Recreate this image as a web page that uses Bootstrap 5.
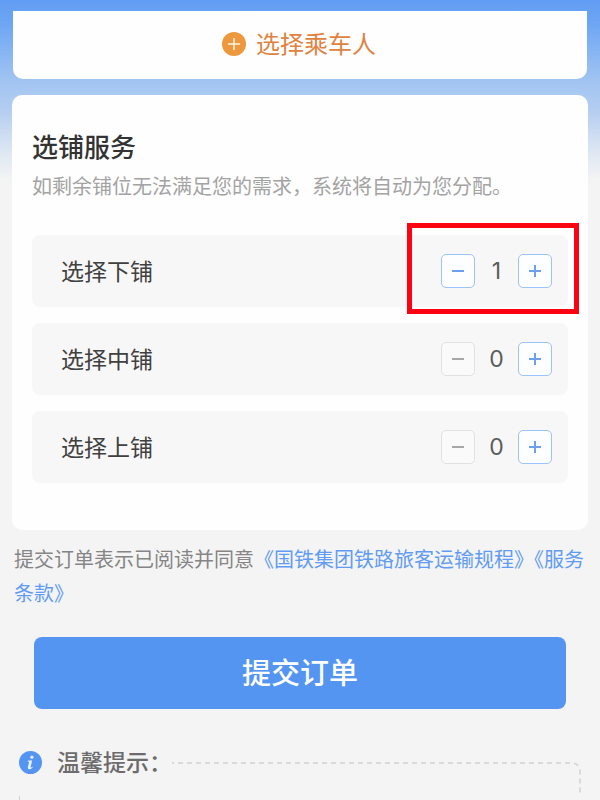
<!DOCTYPE html>
<html lang="zh-CN">
<head>
<meta charset="utf-8">
<meta name="viewport" content="width=device-width, initial-scale=1">
<title>提交订单</title>
<link href="https://cdn.jsdelivr.net/npm/bootstrap@5.3.0/dist/css/bootstrap.min.css" rel="stylesheet">
<style>
  body {
    font-family: "Noto Sans CJK SC", sans-serif;
    color: #333;
    background: #f4f4f4 linear-gradient(#619df4 0, #6ea6f4 24px, #a0c4f2 80px, #b4cdf1 110px, #dce6f2 150px, #f4f4f4 180px) no-repeat 0 0 / 100% 180px;
    min-height: 100vh;
    overflow-x: hidden;
  }
  .page { padding: 11px 12px 0; }
  .panel { background: #fefefe; border-radius: 10px; }
  .passenger { margin: 0 1px; height: 68px; border-radius: 0 0 10px 10px; }
  .passenger button { color: #e0823f; font-size: 24px; line-height: 32px; gap: 10px; padding: 0 2px 4px 0; }
  .passenger svg { margin-top: 2px; }
  .berths { padding: 31px 20px 47px; }
  .berths h1 { font-size: 26px; line-height: 40px; font-weight: 500; }
  .hint { font-size: 20px; line-height: 30px; color: #a3a3a3; margin-top: 5px; margin-bottom: 34px; white-space: nowrap; }
  .berth-row { background: #f7f7f7; border-radius: 8px; height: 72px; padding-left: 29px; font-size: 23px; color: #404040; }
  .berth-name { padding-bottom: 2px; }
  .step { width: 34px; height: 34px; border: 1px solid #9dc3f8; border-radius: 5px; background: #fdfeff; color: #6c9fef; }
  .step:disabled { border-color: #e2e2e2; background: #fafafa; color: #a8a8a8; }
  .count { width: 43px; font-family: Inter, sans-serif; font-size: 23px; color: #5c5c5c; }
  .highlight { right: -11px; top: -12px; bottom: -7px; width: 172px; border: 5px solid #fb0310; }
  .agreement { font-size: 20px; line-height: 34px; color: #858585; margin: 12px 0 27px 2px; }
  .agreement a { color: #629cf2; }
  .submit { height: 72px; background: #5595f2; border-radius: 8px; font-size: 29px; line-height: 40px; font-weight: 500; margin: 0 22px; padding: 0 0 4px; }
  .tips { margin: 34px 7px 0; }
  .tips h2 { font-size: 23px; line-height: 36px; font-weight: 500; color: #6c6c6c; margin-left: 15px; }
  .tips-frame { height: 37px; }
  .tips-frame rect { width: calc(100% + 19px); fill: none; stroke: #dadada; stroke-width: 2; stroke-dasharray: 5 4; }
  .tips-edge { width: 1px; height: 4px; background: #cfcfcf; }
</style>
</head>
<body>
<main class="container-fluid px-0">
  <div class="page">
    <section class="panel passenger d-flex align-items-center justify-content-center">
      <button type="button" class="btn border-0 d-flex align-items-center">
        <svg width="24" height="24" viewBox="0 0 24 24" aria-hidden="true"><circle cx="12" cy="12" r="12" fill="#ed983d"/><path d="M12 6.500v11M6.500 12h11" stroke="#fff3df" stroke-width="1.600" stroke-linecap="round"/></svg>
        <span>选择乘车人</span>
      </button>
    </section>

    <section class="panel berths mt-3">
      <h1 class="mb-0">选铺服务</h1>
      <p class="hint">如剩余铺位无法满足您的需求，系统将自动为您分配。</p>
      <div class="d-flex flex-column gap-3">
        <div class="berth-row position-relative d-flex align-items-center pe-3">
          <span class="berth-name me-auto">选择下铺</span>
          <button type="button" class="step p-0 d-flex align-items-center justify-content-center" aria-label="减少下铺"><svg width="12" height="12"><path d="M0 6h12" stroke="currentColor" stroke-width="2"/></svg></button>
          <output class="count text-center">1</output>
          <button type="button" class="step p-0 d-flex align-items-center justify-content-center" aria-label="增加下铺"><svg width="12" height="12"><path d="M0 6h12M6 0v12" stroke="currentColor" stroke-width="2"/></svg></button>
          <span class="highlight position-absolute pe-none"></span>
        </div>
        <div class="berth-row d-flex align-items-center pe-3">
          <span class="berth-name me-auto">选择中铺</span>
          <button type="button" disabled class="step p-0 d-flex align-items-center justify-content-center" aria-label="减少中铺"><svg width="12" height="12"><path d="M0 6h12" stroke="currentColor" stroke-width="2"/></svg></button>
          <output class="count text-center">0</output>
          <button type="button" class="step p-0 d-flex align-items-center justify-content-center" aria-label="增加中铺"><svg width="12" height="12"><path d="M0 6h12M6 0v12" stroke="currentColor" stroke-width="2"/></svg></button>
        </div>
        <div class="berth-row d-flex align-items-center pe-3">
          <span class="berth-name me-auto">选择上铺</span>
          <button type="button" disabled class="step p-0 d-flex align-items-center justify-content-center" aria-label="减少上铺"><svg width="12" height="12"><path d="M0 6h12" stroke="currentColor" stroke-width="2"/></svg></button>
          <output class="count text-center">0</output>
          <button type="button" class="step p-0 d-flex align-items-center justify-content-center" aria-label="增加上铺"><svg width="12" height="12"><path d="M0 6h12M6 0v12" stroke="currentColor" stroke-width="2"/></svg></button>
        </div>
      </div>
    </section>

    <p class="agreement">提交订单表示已阅读并同意<a href="#rules" class="text-decoration-none">《国铁集团铁路旅客运输规程》</a><a href="#terms" class="text-decoration-none">《服务条款》</a></p>

    <div class="d-grid">
      <button type="button" class="submit btn border-0 text-white">提交订单</button>
    </div>

    <section class="tips">
      <div class="d-flex align-items-start">
        <svg class="flex-shrink-0 mt-1 pt-1" width="23" height="27" viewBox="0 0 23 23" aria-hidden="true"><circle cx="11.500" cy="11.500" r="11.500" fill="#5595f2"/><circle cx="12.900" cy="6.200" r="1.600" fill="#e9f2ff"/><path d="M9 9.600h4.200l-1.600 6.400q-.2 1 .6.600l1.100-.8.400.6q-2 2-3.600 1.900-1.700-.2-1.200-2.300l1.300-5.300H8.800z" fill="#e9f2ff"/></svg>
        <h2 class="flex-shrink-0 mb-0">温馨提示：</h2>
        <svg class="tips-frame flex-grow-1 mt-3 w-100" aria-hidden="true"><rect x="-20" y="4" height="90" rx="8"/></svg>
      </div>
      <div class="tips-edge"></div>
    </section>
  </div>
</main>
<script src="https://cdn.jsdelivr.net/npm/bootstrap@5.3.0/dist/js/bootstrap.bundle.min.js"></script>
</body>
</html>
